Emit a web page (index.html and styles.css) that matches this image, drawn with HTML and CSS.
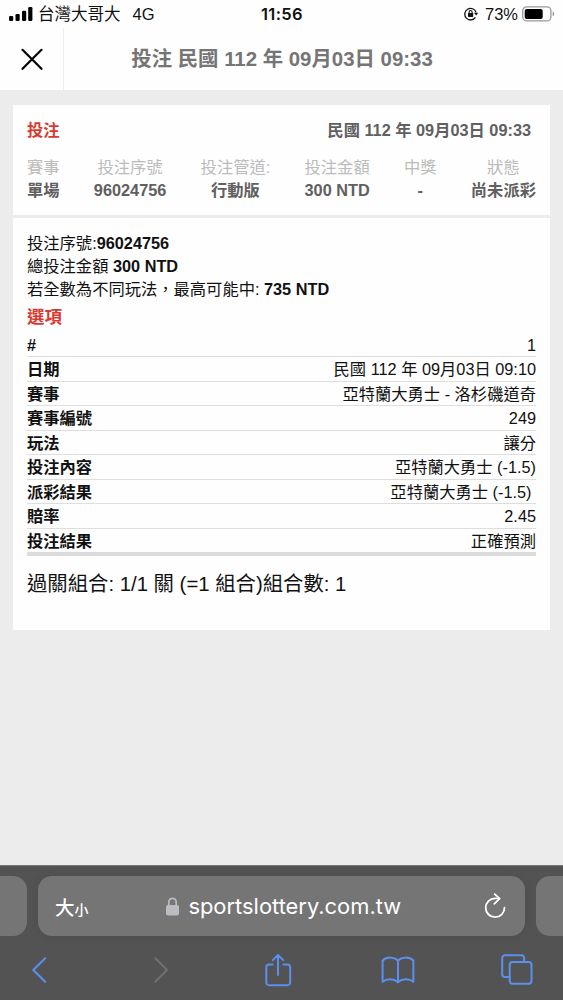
FILE: index.html
```
<!DOCTYPE html>
<html lang="zh-Hant">
<head>
  <meta charset="UTF-8">
  <meta name="viewport" content="width=device-width, initial-scale=1.0">
  <title>投注</title>
  <link rel="stylesheet" href="styles.css">
</head>

<body>
  <div class="status">
    <div class="status-left">
      <svg width="24" height="16" viewBox="0 0 24 16">
        <rect x="0" y="10" width="4.2" height="5" rx="1.2"/>
        <rect x="6.5" y="8" width="4.2" height="7" rx="1.2"/>
        <rect x="13" y="4.8" width="4.2" height="10.2" rx="1.2"/>
        <rect x="19.2" y="1" width="4.2" height="14" rx="1.2"/>
      </svg>
      <span class="carrier">台灣大哥大</span>
      <span>4G</span>
    </div>
    <div class="time">11:56</div>
    <div class="status-right">
      <svg width="14" height="14" viewBox="0 0 14 14" fill="none" stroke="#111" stroke-width="1.3">
        <path d="M11.4 10.4A5.8 5.8 0 1 1 12.1 5.4"/>
        <path d="M9.9 5.7H14.2L12.3 8.5Z" fill="#111" stroke="none"/>
        <path d="M5.1 6.2V5a1.5 1.5 0 0 1 3 0v1.2" stroke-width="1.1"/>
        <rect x="4" y="6" width="5.2" height="3.9" rx=".6" fill="#111" stroke="none"/>
      </svg>
      <span class="percent">73%</span>
      <svg width="33" height="16" viewBox="0 0 33 16">
        <rect x=".7" y=".9" width="28.2" height="14" rx="4" fill="none" stroke="#999" stroke-width="1.3"/>
        <rect x="2.7" y="2.9" width="18" height="10" rx="2"/>
        <path d="M30.6 5.5c2.2.8 2.2 4 0 4.8Z" fill="#999"/>
      </svg>
    </div>
  </div>

  <header class="header">
    <div class="close">
      <svg width="22" height="22" viewBox="0 0 22 22" fill="none" stroke="#000" stroke-width="2.2" stroke-linecap="round">
        <path d="M1.5 1.8 20.5 20.8M20.5 1.8 1.5 20.8"/>
      </svg>
    </div>
    <h1 class="title">投注 民國 112 年 09月03日 09:33</h1>
  </header>

  <main class="page">
    <section class="card summary">
      <div class="summary-top">
        <span class="red">投注</span>
        <span class="date">民國 112 年 09月03日 09:33</span>
      </div>
      <div class="cols">
        <div><p>賽事</p><b>單場</b></div>
        <div><p>投注序號</p><b>96024756</b></div>
        <div><p>投注管道:</p><b>行動版</b></div>
        <div><p>投注金額</p><b>300 NTD</b></div>
        <div><p>中獎</p><b>-</b></div>
        <div><p>狀態</p><b>尚未派彩</b></div>
      </div>
    </section>

    <section class="card detail">
      <div class="info">
        <p>投注序號:<b>96024756</b></p>
        <p>總投注金額 <b>300 NTD</b></p>
        <p>若全數為不同玩法，最高可能中: <b>735 NTD</b></p>
      </div>
      <h2 class="red options">選項</h2>
      <div class="rows">
        <div class="row"><b>#</b><span>1</span></div>
        <div class="row"><b>日期</b><span>民國 112 年 09月03日 09:10</span></div>
        <div class="row"><b>賽事</b><span>亞特蘭大勇士 - 洛杉磯道奇</span></div>
        <div class="row"><b>賽事編號</b><span>249</span></div>
        <div class="row"><b>玩法</b><span>讓分</span></div>
        <div class="row"><b>投注內容</b><span>亞特蘭大勇士 (-1.5)</span></div>
        <div class="row"><b>派彩結果</b><span>亞特蘭大勇士 (-1.5)&nbsp;</span></div>
        <div class="row"><b>賠率</b><span>2.45</span></div>
        <div class="row"><b>投注結果</b><span>正確預測</span></div>
      </div>
      <p class="combo">過關組合: 1/1 關 (=1 組合)組合數: 1</p>
    </section>
  </main>

  <footer class="browser">
    <div class="tabs">
      <div class="tab-prev"></div>
      <div class="address">
        <span class="size">大<small>小</small></span>
        <div class="url">
          <svg width="13" height="19" viewBox="0 0 13 19">
            <path d="M2.8 8V5a3.7 3.7 0 0 1 7.4 0V8" fill="none" stroke="#bcbbc2" stroke-width="1.7"/>
            <rect x="0" y="8" width="13" height="10.4" rx="1.8" fill="#bcbbc2"/>
          </svg>
          <span>sportslottery.com.tw</span>
        </div>
        <svg class="reload" width="22" height="26" viewBox="0 0 22 26" fill="none" stroke="#fff" stroke-width="1.8" stroke-linecap="round" stroke-linejoin="round">
          <path d="M20.5 14.6A9.4 9.4 0 1 1 11.1 5.4H15.3"/>
          <path d="M10.7 1.1 15.6 5.6 10.3 10.8"/>
        </svg>
      </div>
      <div class="tab-next"></div>
    </div>
    <div class="tools">
      <svg width="34" height="28" viewBox="0 0 16 28"><path d="M14.2 2.3 2.3 14 14.2 25.8"/></svg>
      <svg class="off" width="34" height="28" viewBox="0 0 16 28"><path d="M1.8 2.3 13.5 14 1.8 25.8"/></svg>
      <svg width="34" height="34" viewBox="0 0 28 34"><path d="M8.7 11.5H5A2.7 2.7 0 0 0 2.3 14.2V29.5A2.7 2.7 0 0 0 5 32.2H23.5A2.7 2.7 0 0 0 26.2 29.5V14.2A2.7 2.7 0 0 0 23.5 11.5H19.3M14 22V2M8.8 7.1 14 1.9 19.2 7.1"/></svg>
      <svg width="34" height="28" viewBox="0 0 34 28"><path d="M17 4.6C13.2.7 5.6.6 1.6 4.5V25.8C6 22.3 12.8 22.5 17 26.2 21.2 22.5 28 22.3 32.4 25.8V4.5C28.4.6 20.8.7 17 4.6V26"/></svg>
      <svg width="34" height="32" viewBox="0 0 32 32"><path d="M8.7 23H3.8A2.6 2.6 0 0 1 1.2 20.4V4A2.8 2.8 0 0 1 4 1.2H20.3A2.8 2.8 0 0 1 23.1 4V8.1"/><rect x="8.7" y="8.1" width="21.8" height="21.6" rx="3"/></svg>
    </div>
  </footer>
</body>
</html>
```
FILE: styles.css
```
* {
  box-sizing: border-box;
}

body {
  margin: 0;
  height: 1000px;
  display: flex;
  flex-direction: column;
  overflow: hidden;
  background: #ececec;
  color: #111;
  font-family: "Liberation Sans", "Noto Sans CJK TC", sans-serif;
  font-size: 16.3px;
}

p, h1, h2 {
  margin: 0;
}

svg {
  display: block;
  flex: none;
}

.status {
  display: grid;
  grid-template-columns: 1fr auto 1fr;
  align-items: center;
  height: 28px;
  padding: 0 8px 0 9px;
  background: #fefefe;
  font-size: 16.5px;
  line-height: 28px;
}

.status-left, .status-right {
  display: flex;
  align-items: center;
}

.carrier {
  margin: 0 12px 0 5px;
}

.time {
  font-family: Inter, sans-serif;
  font-weight: 600;
  font-size: 16.5px;
  letter-spacing: .4px;
}

.status-right {
  justify-content: flex-end;
}

.percent {
  margin: 0 4px 0 7px;
}

.header {
  display: flex;
  height: 62px;
  background: #fefefe;
}

.close {
  width: 64px;
  padding: 20px 0 0 21px;
  border-right: 1px solid #eee;
}

.title {
  flex: 1;
  padding-right: 63px;
  text-align: center;
  color: #757575;
  font-size: 20.4px;
  line-height: 63px;
  white-space: nowrap;
}

.page {
  flex: 1;
  padding: 15px 13px 0;
}

.card {
  background: #fefefe;
  padding: 0 14px;
}

.red {
  color: #d93a30;
  font-weight: bold;
}

.summary {
  height: 110px;
  padding-top: 13px;
}

.summary-top {
  display: flex;
  justify-content: space-between;
  padding-right: 5px;
  line-height: 25px;
  height: 38px;
}

.date {
  color: #606060;
  font-weight: bold;
}

.cols {
  display: flex;
  justify-content: space-between;
  text-align: center;
  line-height: 23px;
}

.cols p {
  color: #bbb;
}

.cols b {
  color: #606060;
  display: block;
}

.detail {
  margin-top: 3px;
  height: 412px;
  padding-top: 14px;
}

.info {
  line-height: 23px;
}

.options {
  font-size: 17.5px;
  line-height: 33px;
  height: 32px;
}

.row {
  display: flex;
  justify-content: space-between;
  height: 24.45px;
  line-height: 25px;
  border-bottom: 1.5px solid #dedede;
}

.row:last-child {
  height: 27px;
  border-bottom: 4px solid #dcdcdc;
}

.combo {
  margin-top: 12px;
  font-size: 20.35px;
  line-height: 32px;
}

.browser {
  height: 135px;
  background: #535353;
  border-top: 1px solid #777;
}

.tabs {
  display: flex;
  gap: 11px;
  padding-top: 10px;
}

.tab-prev, .tab-next {
  width: 27px;
  height: 60px;
  background: #757575;
  border-radius: 0 14px 14px 0;
}

.tab-next {
  border-radius: 14px 0 0 14px;
}

.address {
  flex: 1;
  display: flex;
  align-items: center;
  justify-content: space-between;
  height: 60px;
  padding: 0 19px 0 17px;
  border-radius: 14px;
  background: #757575;
  color: #fff;
  box-shadow: 0 0 10px rgba(0, 0, 0, .08);
}

.size {
  font-size: 19.5px;
  font-weight: 500;
}

.size small {
  font-size: 14px;
}

.url {
  display: flex;
  align-items: center;
  gap: 9px;
  margin-right: 5px;
  font-family: Inter, sans-serif;
  font-size: 21.9px;
  line-height: 28px;
}

.tools {
  display: flex;
  justify-content: space-between;
  align-items: center;
  height: 64px;
  padding: 4px 29px 0 22px;
}

.tools svg {
  fill: none;
  stroke: #5b8ff0;
  stroke-width: 2;
  stroke-linecap: round;
  stroke-linejoin: round;
}

.tools .off {
  padding-left: 5px;
  stroke: #707070;
}
```
